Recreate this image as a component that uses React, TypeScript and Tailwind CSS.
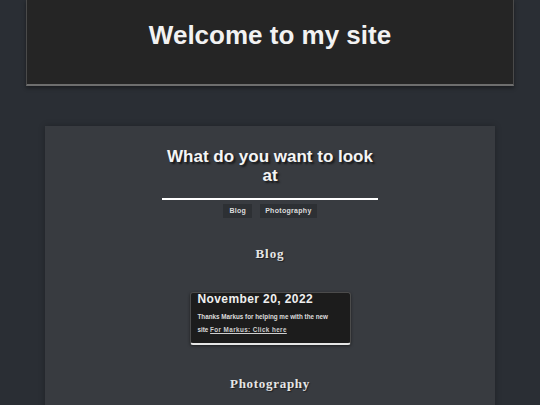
import React from "react";

const App: React.FC = () => {
  return (
    <div className="min-h-[405px] bg-[#2a2e34] font-['Liberation_Sans',Arial,sans-serif] text-white">
      <header className="mx-[26px] h-[86px] flex items-center justify-center bg-[#252525] border-x border-[#4a4a4a] border-b-2 border-b-[#6e6e6e] shadow-[0_2px_4px_rgba(0,0,0,0.4)]">
        <h1 className="text-[26px] font-bold text-[#f2f2f2] -mt-[13px]">
          Welcome to my site
        </h1>
      </header>

      <main className="mx-[45px] mt-[40px] bg-[#383b40] pt-[21px] pb-[20px] flex flex-col items-center shadow-[0_0_6px_rgba(0,0,0,0.25)]">
        <h2 className="w-[216px] text-center text-[17px] leading-[19px] font-bold text-[#f5f5f5] [text-shadow:2px_2px_2px_rgba(0,0,0,0.6)]">
          What do you want to look at
        </h2>
        <div className="w-[216px] h-[2px] bg-white mt-[13px]" />
        <nav className="flex gap-[8px] mt-[4px]">
          <span className="h-[14px] px-[6px] flex items-center bg-[#2d3034] text-[7px] font-bold tracking-[0.3px] text-[#dcdcdc]">
            Blog
          </span>
          <span className="h-[14px] px-[5px] flex items-center bg-[#2d3034] text-[7px] font-bold tracking-[0.3px] text-[#dcdcdc]">
            Photography
          </span>
        </nav>

        <h3 className="mt-[26px] font-['Liberation_Serif',serif] text-[13px] font-bold tracking-[0.9px] text-[#e6e6e6] [text-shadow:1px_1px_1px_rgba(0,0,0,0.5)]">
          Blog
        </h3>

        <article className="mt-[28px] w-[161px] h-[53px] bg-[#1c1c1c] rounded-[3px] border border-[#4b4b4b] border-b-2 border-b-[#e6e6e6] pl-[7px] pr-[16px] shadow-[0_1px_3px_rgba(0,0,0,0.5)]">
          <div className="text-[12px] leading-[12px] font-bold tracking-[0.4px] text-[#efefef] whitespace-nowrap">
            November 20, 2022
          </div>
          <p className="mt-[5px] text-[6.3px] leading-[13px] font-bold text-[#dedede]">
            Thanks Markus for helping me with the new site{" "}
            <a className="underline tracking-[0.4px] text-[#cfcfcf]">For Markus: Click here</a>
          </p>
        </article>

        <h3 className="mt-[29px] font-['Liberation_Serif',serif] text-[13px] font-bold tracking-[0.7px] text-[#e6e6e6] [text-shadow:1px_1px_1px_rgba(0,0,0,0.5)]">
          Photography
        </h3>
        <div className="h-[40px]" />
      </main>
    </div>
  );
};

export default App;
